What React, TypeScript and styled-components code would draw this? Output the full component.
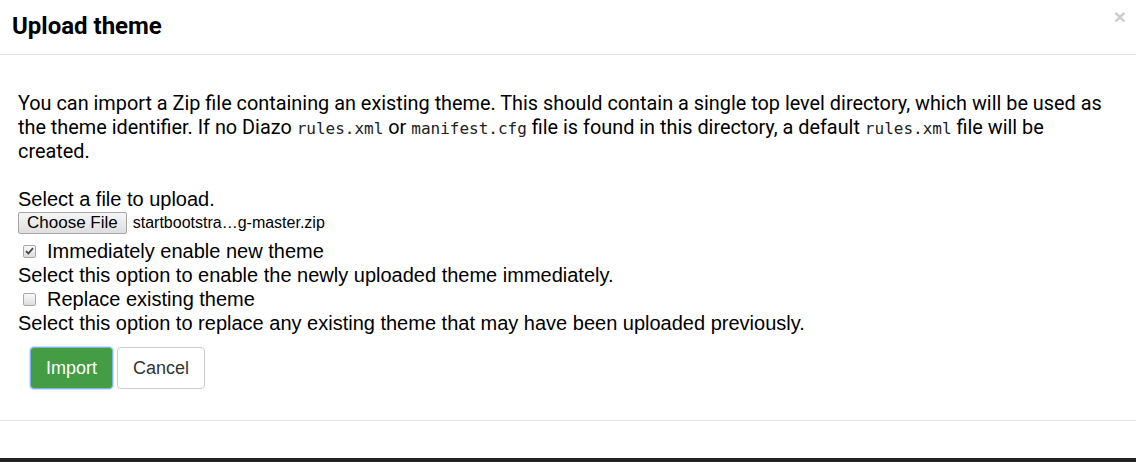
import React from "react";
import styled, { createGlobalStyle } from "styled-components";

const Global = createGlobalStyle`
  html, body { margin: 0; padding: 0; background: #fff; }
  body { font-family: "Liberation Sans", Arial, sans-serif; color: #000; }
  * { box-sizing: border-box; }
`;

const Page = styled.div`
  width: 1136px;
  height: 462px;
  display: flex;
  flex-direction: column;
  background: #fff;
  overflow: hidden;
`;

const Header = styled.div`
  height: 55px;
  flex: none;
  display: flex;
  justify-content: space-between;
  align-items: flex-start;
  padding: 0 10px 0 12px;
  border-bottom: 1px solid #e5e5e5;
`;

const Title = styled.h4`
  margin: 0;
  padding-top: 12px;
  font-family: Roboto, "Liberation Sans", sans-serif;
  font-weight: 700;
  font-size: 24px;
  line-height: 28px;
  color: #000;
`;

const Close = styled.button`
  margin-top: 6px;
  padding: 0;
  border: 0;
  background: transparent;
  font-family: "Liberation Sans", Arial, sans-serif;
  font-size: 21px;
  font-weight: 700;
  line-height: 1;
  color: #000;
  opacity: 0.2;
  cursor: pointer;
`;

const Body = styled.div`
  padding: 37px 18px 31px;
  border-bottom: 1px solid #e5e5e5;
`;

const Intro = styled.p`
  margin: 0 0 23px;
  font-family: Roboto, "Liberation Sans", sans-serif;
  font-size: 19.85px;
  line-height: 24px;
  color: #000;
`;

const Code = styled.code`
  font-family: "DejaVu Sans Mono", "Liberation Mono", monospace;
  font-size: 16px;
  line-height: 1;
  color: #222;
`;

const Form = styled.form`
  font-family: "Liberation Sans", Arial, sans-serif;
  font-size: 20px;
  line-height: 24px;
  color: #000;
`;

const Line = styled.div`
  height: 24px;
  white-space: nowrap;
`;

const FileRow = styled.div`
  height: 28px;
  display: flex;
  align-items: flex-start;
  padding-top: 1px;
  gap: 6px;
`;

const FileButton = styled.span`
  display: inline-flex;
  align-items: center;
  height: 22px;
  padding: 0 8px;
  border: 1px solid #a6a6a6;
  border-radius: 2px;
  background: linear-gradient(#f6f6f6, #dedede);
  font-size: 17px;
  color: #000;
`;

const FileName = styled.span`
  font-size: 16px;
  line-height: 22px;
`;

const CheckLine = styled.label`
  display: flex;
  align-items: center;
  height: 24px;
  gap: 11px;
  padding-left: 5px;
`;

const Box = styled.span`
  width: 13px;
  height: 13px;
  flex: none;
  display: flex;
  align-items: center;
  justify-content: center;
  border: 1px solid #a9a9a9;
  border-radius: 2px;
  background: linear-gradient(#fbfbfb, #dcdcdc);
`;

const Actions = styled.div`
  display: flex;
  gap: 4px;
  margin-top: 12px;
  padding-left: 12px;
`;

const Btn = styled.button<{ $primary?: boolean }>`
  height: 42px;
  padding: 0 15px;
  border-radius: 4px;
  font-family: "Liberation Sans", Arial, sans-serif;
  font-size: 18px;
  cursor: pointer;
  border: 1px solid ${(p) => (p.$primary ? "#7fb3ee" : "#cccccc")};
  background: ${(p) => (p.$primary ? "#449d44" : "#ffffff")};
  color: ${(p) => (p.$primary ? "#ffffff" : "#333333")};
  box-shadow: ${(p) => (p.$primary ? "0 0 0 1px rgba(102,175,233,0.35)" : "none")};
`;

const Footer = styled.div`
  flex: 1;
`;

const Bottom = styled.div`
  height: 4px;
  flex: none;
  background: #222;
`;

function Check({ checked }: { checked?: boolean }) {
  return (
    <Box>
      {checked && (
        <svg width="9" height="8" viewBox="0 0 9 8">
          <path d="M1 4.2 L3.4 6.5 L8 1.2" fill="none" stroke="#444" strokeWidth="1.8" />
        </svg>
      )}
    </Box>
  );
}

export default function App() {
  return (
    <>
      <Global />
      <Page>
        <Header>
          <Title>Upload theme</Title>
          <Close aria-label="Close">×</Close>
        </Header>
        <Body>
          <Intro>
            You can import a Zip file containing an existing theme. This should contain a single top level directory, which will be used as
            the theme identifier. If no Diazo <Code>rules.xml</Code> or <Code>manifest.cfg</Code> file is found in this directory, a default{" "}
            <Code>rules.xml</Code> file will be created.
          </Intro>
          <Form onSubmit={(e) => e.preventDefault()}>
            <Line>Select a file to upload.</Line>
            <FileRow>
              <FileButton>Choose File</FileButton>
              <FileName>startbootstra…g-master.zip</FileName>
            </FileRow>
            <CheckLine>
              <Check checked />
              Immediately enable new theme
            </CheckLine>
            <Line>Select this option to enable the newly uploaded theme immediately.</Line>
            <CheckLine>
              <Check />
              Replace existing theme
            </CheckLine>
            <Line>Select this option to replace any existing theme that may have been uploaded previously.</Line>
            <Actions>
              <Btn $primary type="submit">Import</Btn>
              <Btn type="button">Cancel</Btn>
            </Actions>
          </Form>
        </Body>
        <Footer />
        <Bottom />
      </Page>
    </>
  );
}
